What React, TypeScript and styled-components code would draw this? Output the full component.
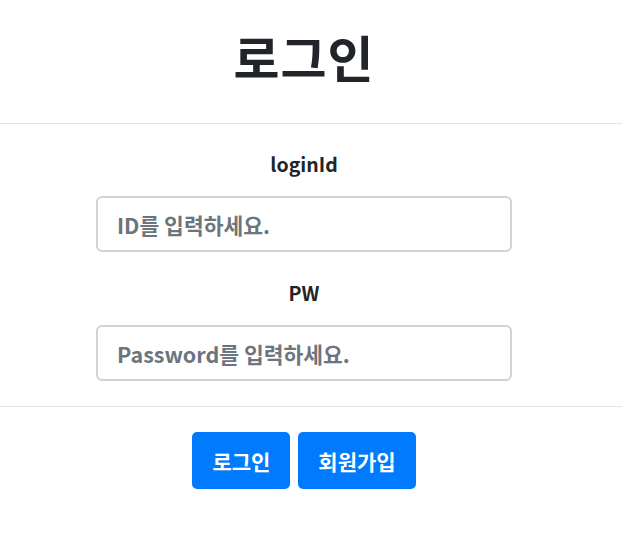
import React from "react";
import styled, { createGlobalStyle } from "styled-components";

const Global = createGlobalStyle`
  html, body { margin: 0; padding: 0; background: #fff; }
  body { font-family: "Noto Sans CJK KR", "Noto Sans", sans-serif; color: #212529; }
  * { box-sizing: border-box; }
`;

const Page = styled.div`
  display: flex;
  flex-direction: column;
  width: 100%;
`;

const Section = styled.div<{ $pt: number; $pb: number }>`
  display: flex;
  flex-direction: column;
  align-items: center;
  padding: ${(p) => p.$pt}px 14px ${(p) => p.$pb}px 0;
`;

const Title = styled.h1`
  margin: 0;
  font-size: 50px;
  line-height: 60px;
  font-weight: 700;
  color: #212529;
  letter-spacing: 1px;
`;

const Rule = styled.hr`
  margin: 0;
  border: 0;
  border-top: 1px solid #e3e3e3;
  width: 100%;
`;

const Field = styled.div<{ $mt: number }>`
  display: flex;
  flex-direction: column;
  align-items: center;
  margin-top: ${(p) => p.$mt}px;
`;

const Label = styled.label`
  font-size: 19.5px;
  line-height: 24px;
  font-weight: 700;
  color: #212529;
  margin-bottom: 20px;
`;

const Input = styled.input`
  width: 416px;
  height: 56px;
  padding: 0 19px;
  border: 2px solid #ced4da;
  border-radius: 6px;
  font-family: inherit;
  font-size: 21.5px;
  font-weight: 700;
  color: #495057;
  outline: none;
  &::placeholder { color: #6c757d; opacity: 1; }
`;

const Buttons = styled.div`
  display: flex;
  gap: 8px;
`;

const Button = styled.button`
  height: 57px;
  padding: 0 20px;
  border: 0;
  border-radius: 5px;
  background: #007bff;
  color: #fff;
  font-family: inherit;
  font-size: 21px;
  font-weight: 700;
  cursor: pointer;
`;

export default function App() {
  return (
    <Page>
      <Global />
      <Section $pt={26} $pb={37}>
        <Title>로그인</Title>
      </Section>
      <Rule />
      <Section $pt={28} $pb={25}>
        <Field $mt={0}>
          <Label htmlFor="loginId">loginId</Label>
          <Input id="loginId" placeholder="ID를 입력하세요." />
        </Field>
        <Field $mt={29}>
          <Label htmlFor="pw">PW</Label>
          <Input id="pw" type="password" placeholder="Password를 입력하세요." />
        </Field>
      </Section>
      <Rule />
      <Section $pt={25} $pb={40}>
        <Buttons>
          <Button>로그인</Button>
          <Button>회원가입</Button>
        </Buttons>
      </Section>
    </Page>
  );
}
